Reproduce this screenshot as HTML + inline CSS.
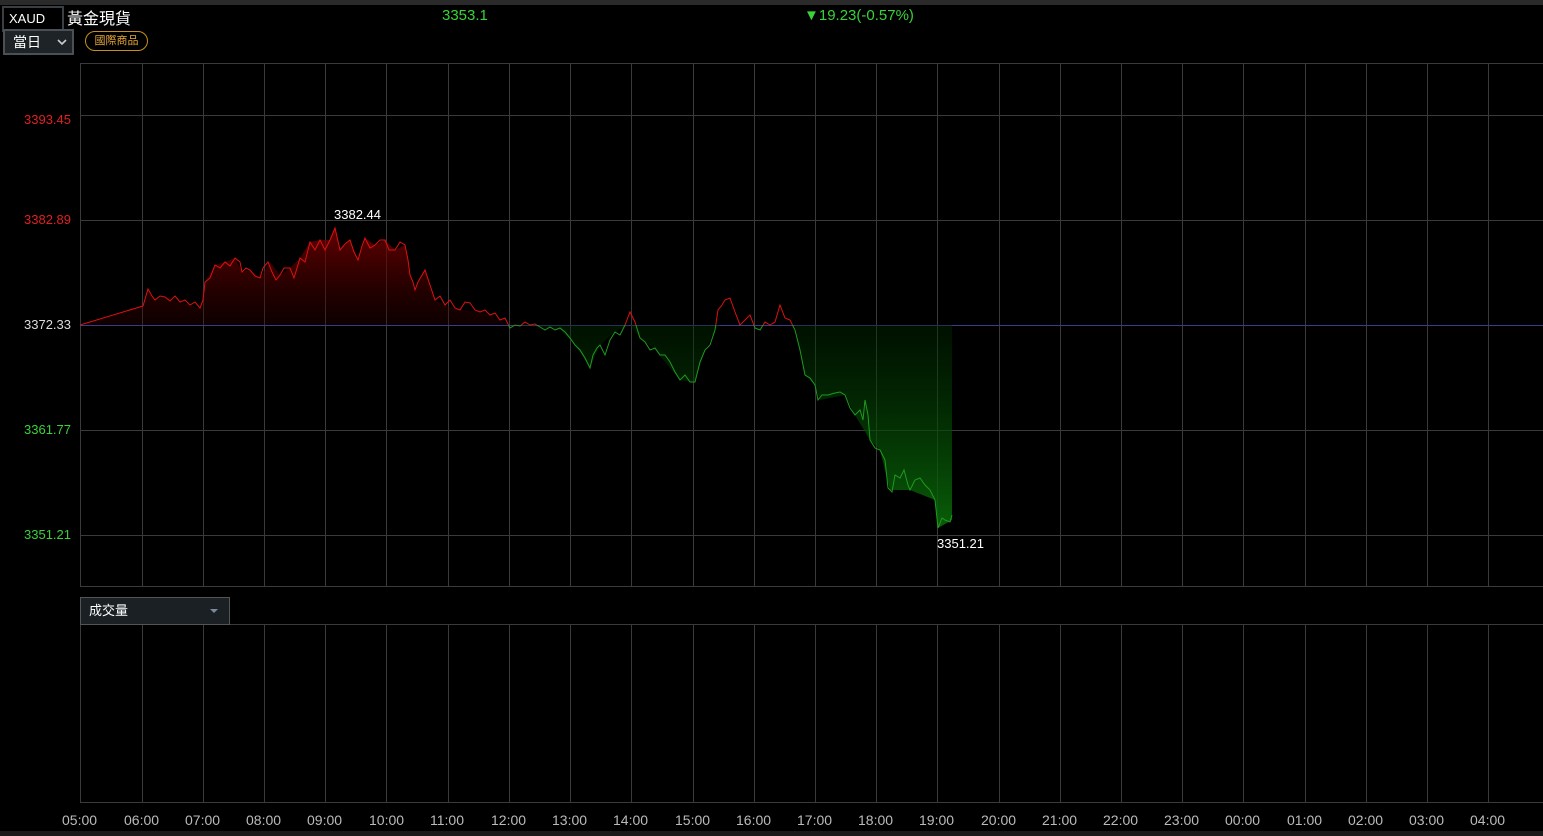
<!DOCTYPE html><html><head><meta charset="utf-8"><style>
body{margin:0;width:1543px;height:836px;background:#000;overflow:hidden;font-family:"Liberation Sans","Noto Sans CJK TC",sans-serif;position:relative}
.a{position:absolute;white-space:nowrap}
</style></head><body>
<div class="a" style="left:0;top:0;width:1543px;height:5px;background:#2a2a2a"></div>
<div class="a" style="left:2px;top:6px;width:58px;height:22px;border:2px solid #3a3f44;background:#000;color:#fff;font-size:13px;line-height:22px;text-indent:5px">XAUD</div>
<div class="a" style="left:67px;top:5px;color:#fff;font-size:16px">黃金現貨</div>
<div class="a" style="left:442px;top:7px;color:#3bd13b;font-size:15px">3353.1</div>
<div class="a" style="left:804px;top:7px;color:#3bd13b;font-size:15px">▼19.23(-0.57%)</div>
<div class="a" style="left:3px;top:29px;width:67px;height:22px;border:2px solid #4a5056;background:#1e2327;color:#fff;font-size:14px;line-height:22px;text-indent:8px">當日<svg style="position:absolute;left:52px;top:8px" width="10" height="7"><path d="M1 1L5 5L9 1" stroke="#ccc" stroke-width="1.6" fill="none"/></svg></div>
<div class="a" style="left:85px;top:31px;width:61px;height:18px;border:1px solid #c8901c;border-radius:10px;color:#e8a838;font-size:11px;line-height:18px;text-align:center">國際商品</div>
<svg class="a" style="left:0;top:0" width="1543" height="836">
<defs>
<linearGradient id="r" gradientUnits="userSpaceOnUse" x1="0" y1="230" x2="0" y2="325"><stop offset="0" stop-color="#7a0000" stop-opacity=".8"/><stop offset="1" stop-color="#300000" stop-opacity=".3"/></linearGradient>
<linearGradient id="g" gradientUnits="userSpaceOnUse" x1="0" y1="325" x2="0" y2="530"><stop offset="0" stop-color="#002a00" stop-opacity=".4"/><stop offset="1" stop-color="#0a6a0a" stop-opacity=".9"/></linearGradient>
<clipPath id="up"><rect x="0" y="0" width="1543" height="325"/></clipPath>
<clipPath id="dn"><rect x="0" y="325" width="1543" height="400"/></clipPath>
<path id="line" d="M80 325L143 306L148 289L152 296L155 300L160 296L165 297L170 301L175 296L180 302L185 300L190 305L195 302L200 308L203 300L205 282L210 278L215 265L220 268L225 262L230 266L235 258L240 262L242 272L246 268L250 270L255 276L260 278L263 268L268 262L272 272L276 280L280 275L284 268L290 268L294 278L300 258L305 262L310 242L315 250L320 240L325 250L330 240L335 228L340 250L345 244L350 240L354 252L358 260L362 246L365 238L370 248L375 245L380 240L385 240L389 250L395 250L400 242L405 245L408 260L410 275L413 282L415 290L418 282L425 270L430 285L435 300L440 296L445 305L450 300L455 308L460 310L465 302L470 303L475 310L480 312L485 310L490 315L495 313L500 320L505 318L510 328L515 325L520 326L525 322L530 325L535 324L540 327L545 330L550 327L555 330L560 328L565 332L570 338L575 345L580 350L585 358L590 368L593 355L597 348L600 345L605 355L610 340L615 332L620 335L625 325L630 312L635 322L640 338L645 342L650 350L655 348L660 355L665 355L670 362L675 372L680 380L685 375L690 382L695 382L700 362L705 350L710 345L715 330L718 310L722 305L725 300L730 298L735 312L740 325L745 320L750 315L755 328L760 330L765 322L770 325L775 322L780 305L785 318L790 320L795 330L800 350L803 365L805 375L810 378L815 385L818 400L822 395L828 395L835 393L840 392L845 395L850 408L855 415L860 410L863 420L865 400L868 415L870 440L875 448L880 450L885 460L888 488L892 492L895 475L900 478L904 470L908 485L910 490L915 480L920 478L925 485L930 490L935 500L938 528L942 518L945 520L950 522L952 515"/>
</defs>
<g stroke="#3a3a3a" stroke-width="1" fill="none">
<rect x="80.5" y="63.5" width="1470" height="523"/>
<path d="M80 115.5H1543M80 220.5H1543M80 430.5H1543M80 535.5H1543M80 624.5H1543M80 802.5H1543"/>
<path d="M142.5 63V587M203.5 63V587M264.5 63V587M325.5 63V587M386.5 63V587M448.5 63V587M509.5 63V587M570.5 63V587M631.5 63V587M693.5 63V587M754.5 63V587M815.5 63V587M876.5 63V587M937.5 63V587M999.5 63V587M1060.5 63V587M1121.5 63V587M1182.5 63V587M1243.5 63V587M1305.5 63V587M1366.5 63V587M1427.5 63V587M1488.5 63V587"/>
<path d="M80.5 624V802M142.5 624V802M203.5 624V802M264.5 624V802M325.5 624V802M386.5 624V802M448.5 624V802M509.5 624V802M570.5 624V802M631.5 624V802M693.5 624V802M754.5 624V802M815.5 624V802M876.5 624V802M937.5 624V802M999.5 624V802M1060.5 624V802M1121.5 624V802M1182.5 624V802M1243.5 624V802M1305.5 624V802M1366.5 624V802M1427.5 624V802M1488.5 624V802"/>
</g>
<path d="M80 325.5H1543" stroke="#3a3a8a"/>
<path d="M80 325L143 306L148 289L155 300L165 297L180 302L200 308L205 282L215 265L225 262L235 258L242 272L250 270L260 278L270 262L280 275L290 268L300 258L310 242L320 240L330 240L335 228L340 250L350 240L358 260L365 238L375 245L385 240L395 250L405 245L410 275L415 290L425 270L435 300L445 305L460 310L480 312L500 320L510 325L952 325 952 520L938 528 935 500 910 490 890 490 880 450 870 440 855 415 845 395 820 400 815 385 805 375 800 350 795 330 790 325 700 362 695 382 680 380 655 350 640 338 630 325 615 332 600 345 590 368 575 345 560 330 510 325Z" fill="url(#r)" clip-path="url(#up)"/>
<path d="M510 325L952 325 952 520L938 528 935 500 910 490 890 490 880 450 870 440 855 415 845 395 820 400 815 385 805 375 800 350 795 325 720 325 715 330 705 350 695 382 680 380 655 350 640 338 630 325 615 332 600 345 590 368 575 345 560 330 540 327Z" fill="url(#g)" clip-path="url(#dn)"/>
<use href="#line" stroke="#e01010" fill="none" stroke-width="1" clip-path="url(#up)"/>
<use href="#line" stroke="#1f9a1f" fill="none" stroke-width="1" clip-path="url(#dn)"/>
</svg>
<div class="a" style="left:24px;top:112px;color:#e02020;font-size:13px">3393.45</div>
<div class="a" style="left:24px;top:212px;color:#e02020;font-size:13px">3382.89</div>
<div class="a" style="left:24px;top:317px;color:#ddd;font-size:13px">3372.33</div>
<div class="a" style="left:24px;top:422px;color:#3bd13b;font-size:13px">3361.77</div>
<div class="a" style="left:24px;top:527px;color:#3bd13b;font-size:13px">3351.21</div>
<div class="a" style="left:334px;top:207px;color:#fff;font-size:13px">3382.44</div>
<div class="a" style="left:937px;top:536px;color:#fff;font-size:13px">3351.21</div>
<div class="a" style="left:80px;top:597px;width:148px;height:26px;border:1px solid #555;background:#1b2024;color:#fff;font-size:13px;line-height:26px;text-indent:8px">成交量<svg style="position:absolute;left:129px;top:11px" width="8" height="5"><path d="M0 0H8L4 4Z" fill="#7a8a9a"/></svg></div>
<div class="a" style="left:0;top:831px;width:1543px;height:5px;background:#1a1a1a"></div>
<div class="a" style="top:812px;left:0;width:1543px;color:#bbb;font-size:14px">
<span class="a" style="left:62px">05:00</span><span class="a" style="left:124px">06:00</span><span class="a" style="left:185px">07:00</span><span class="a" style="left:246px">08:00</span><span class="a" style="left:307px">09:00</span><span class="a" style="left:369px">10:00</span><span class="a" style="left:430px">11:00</span><span class="a" style="left:491px">12:00</span><span class="a" style="left:552px">13:00</span><span class="a" style="left:613px">14:00</span><span class="a" style="left:675px">15:00</span><span class="a" style="left:736px">16:00</span><span class="a" style="left:797px">17:00</span><span class="a" style="left:858px">18:00</span><span class="a" style="left:919px">19:00</span><span class="a" style="left:981px">20:00</span><span class="a" style="left:1042px">21:00</span><span class="a" style="left:1103px">22:00</span><span class="a" style="left:1164px">23:00</span><span class="a" style="left:1225px">00:00</span><span class="a" style="left:1287px">01:00</span><span class="a" style="left:1348px">02:00</span><span class="a" style="left:1409px">03:00</span><span class="a" style="left:1470px">04:00</span>
</div>
</body></html>
